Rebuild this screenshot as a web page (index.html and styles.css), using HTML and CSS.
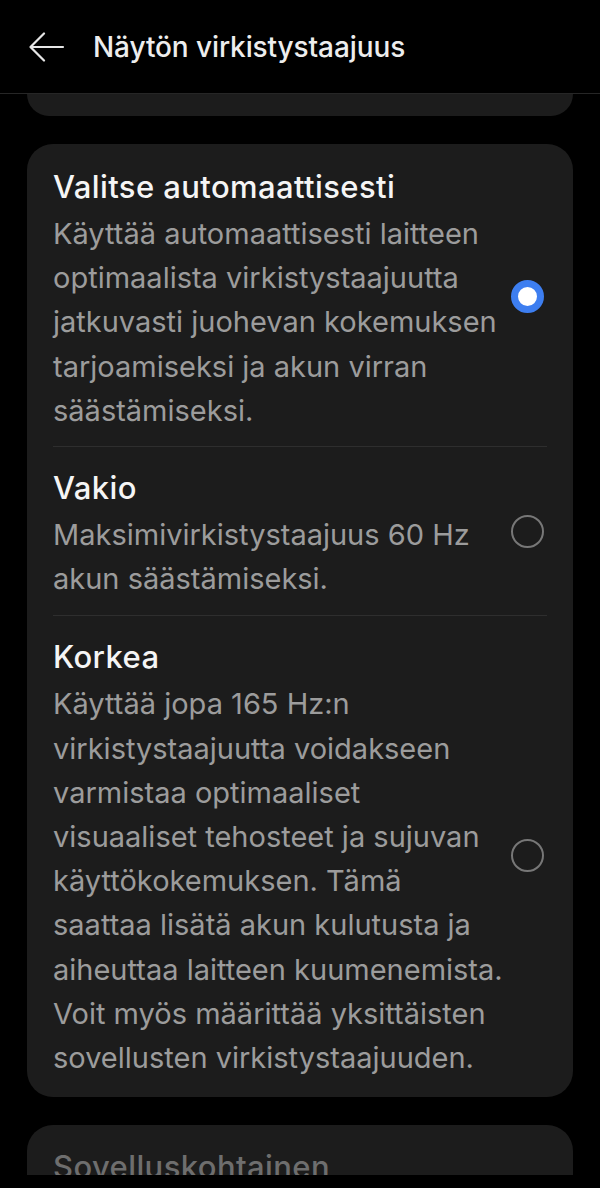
FILE: index.html
```html
<!DOCTYPE html>
<html lang="fi">
<head>
<meta charset="utf-8">
<link rel="stylesheet" href="styles.css">
</head>
<body>
<div class="screen">
  <header class="appbar">
    <svg class="back" width="36" height="30" viewBox="0 0 36 30" aria-hidden="true">
      <path d="M1.5 15 H34 M15 1.5 L1.5 15 L15 28.5" fill="none" stroke="#e6e6e6" stroke-width="2.2" stroke-linecap="round" stroke-linejoin="round"/>
    </svg>
    <h1 class="title">Näytön virkistystaajuus</h1>
  </header>
  <main class="content">
    <div class="card card-partial"></div>
    <section class="card">
      <div class="option">
        <div class="text">
          <div class="opt-title">Valitse automaattisesti</div>
          <div class="opt-desc">Käyttää automaattisesti laitteen optimaalista virkistystaajuutta jatkuvasti juohevan kokemuksen tarjoamiseksi ja akun virran säästämiseksi.</div>
        </div>
        <span class="radio radio-on"></span>
      </div>
      <div class="option">
        <div class="text">
          <div class="opt-title">Vakio</div>
          <div class="opt-desc">Maksimivirkistystaajuus 60 Hz akun säästämiseksi.</div>
        </div>
        <span class="radio"></span>
      </div>
      <div class="option">
        <div class="text">
          <div class="opt-title">Korkea</div>
          <div class="opt-desc">Käyttää jopa 165 Hz:n virkistystaajuutta voidakseen varmistaa optimaaliset visuaaliset tehosteet ja sujuvan käyttökokemuksen. Tämä saattaa lisätä akun kulutusta ja aiheuttaa laitteen kuumenemista. Voit myös määrittää yksittäisten sovellusten virkistystaajuuden.</div>
        </div>
        <span class="radio"></span>
      </div>
    </section>
    <section class="card card-next">
      <div class="next-title">Sovelluskohtainen</div>
    </section>
  </main>
</div>
</body>
</html>
```
FILE: styles.css
```css
* { box-sizing: border-box; }
html, body { margin: 0; padding: 0; background: #000; }
body {
  font-family: Inter, Roboto, "Noto Sans", sans-serif;
  color: #f2f2f2;
}
.screen {
  width: 600px;
  height: 1188px;
  display: flex;
  flex-direction: column;
  overflow: hidden;
}
.appbar {
  height: 94px;
  flex: none;
  display: flex;
  align-items: center;
  padding-left: 29px;
  border-bottom: 1px solid #262626;
}
.back { flex: none; }
.title {
  margin: 0 0 0 28px;
  font-size: 28px;
  font-weight: 500;
  color: #ededed;
  letter-spacing: -0.1px;
}
.content {
  height: 1081px;
  overflow: hidden;
  padding: 0 27px;
  display: flex;
  flex-direction: column;
  gap: 28px;
}
.card {
  background: #1c1c1c;
  border-radius: 26px;
  flex: none;
}
.card-partial {
  height: 22px;
  border-radius: 0 0 24px 24px;
}
.card > .option {
  margin: 0 26px;
  display: flex;
  align-items: center;
  gap: 6px;
  padding: 19px 0 14px;
  border-bottom: 1px solid #2e2e2e;
}
.card > .option:first-child { padding-top: 21px; padding-bottom: 13px; }
.card > .option:last-child { border-bottom: none; padding-bottom: 17px; }
.text { flex: 1; min-width: 0; }
.opt-title {
  font-size: 31px;
  font-weight: 500;
  line-height: 44px;
  letter-spacing: 0.4px;
  color: #f5f5f5;
}
.opt-desc {
  margin-top: 3px;
  font-size: 29px;
  line-height: 44.2px;
  color: #9c9c9c;
}
.radio {
  flex: none;
  width: 33px;
  height: 33px;
  border-radius: 50%;
  border: 2px solid #777;
  margin-right: 3px;
  margin-bottom: 5px;
}
.radio-on {
  border: 7px solid #3d7ef0;
  background: #fff;
}
.card-next {
  padding: 20px 26px 0;
  height: 100px;
}
.next-title {
  font-size: 31px;
  font-weight: 500;
  line-height: 44px;
  letter-spacing: 0.4px;
  color: #6e6e6e;
}
```
